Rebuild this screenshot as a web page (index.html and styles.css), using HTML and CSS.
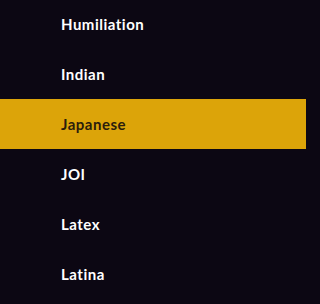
FILE: index.html
```html
<!DOCTYPE html>
<html>
<head>
<meta charset="utf-8">
<link rel="stylesheet" href="styles.css">
</head>
<body>
<ul class="menu">
  <li class="item">Humiliation</li>
  <li class="item">Indian</li>
  <li class="item active">Japanese</li>
  <li class="item">JOI</li>
  <li class="item">Latex</li>
  <li class="item">Latina</li>
</ul>
</body>
</html>
```
FILE: styles.css
```css
html, body {
  margin: 0;
  padding: 0;
  background: #0c0713;
  width: 306px;
  height: 304px;
  overflow: hidden;
}
.menu {
  list-style: none;
  margin: -1px 0 0 0;
  padding: 0;
}
.item {
  height: 50px;
  display: flex;
  align-items: center;
  padding-left: 61px;
  font-family: "Lato", "Noto Sans", sans-serif;
  font-weight: 700;
  font-size: 15px;
  letter-spacing: 0.5px;
  color: #ffffff;
}
.item.active {
  background: #dca409;
  color: #2b1d0c;
}
```
